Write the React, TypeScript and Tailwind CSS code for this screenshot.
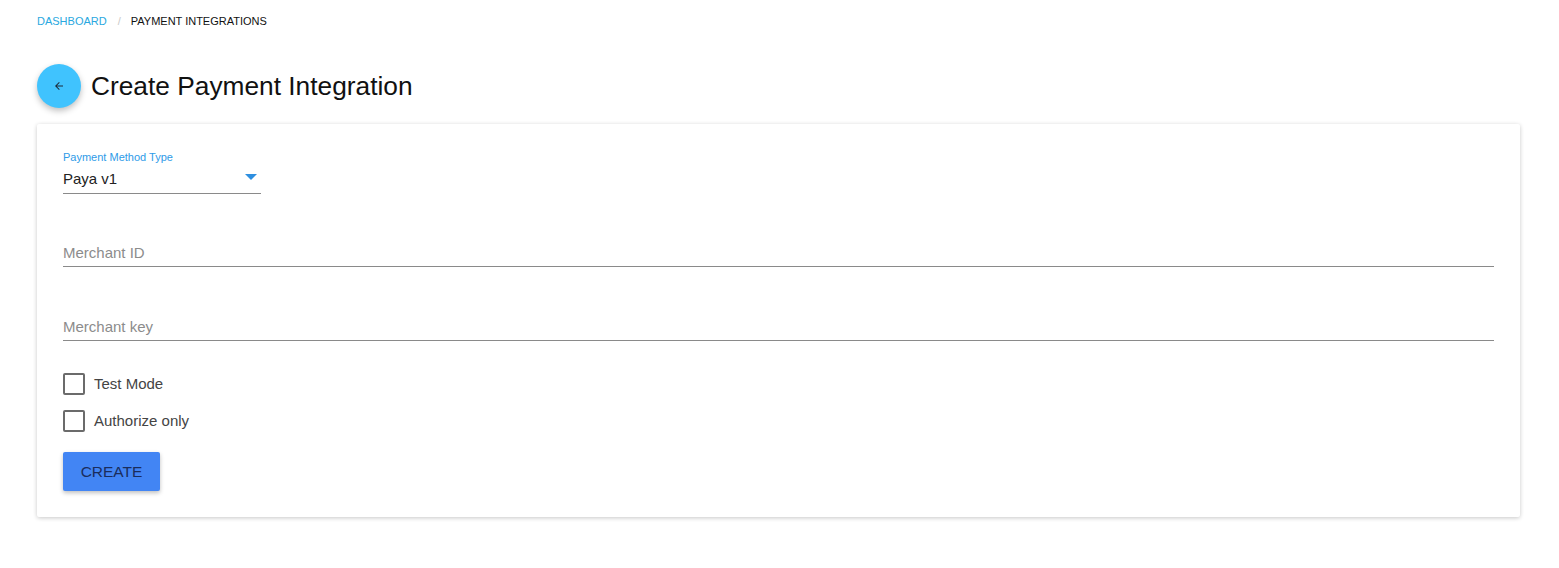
import React from "react";

const font = { fontFamily: '"Liberation Sans", Arial, sans-serif' };

function Field({ label }: { label: string }) {
  return (
    <div className="w-full border-b border-[#8a8a8a] pb-[4px] text-[15px] leading-[18px] text-[#8c8c8c]">
      {label}
    </div>
  );
}

function Check({ label }: { label: string }) {
  return (
    <label className="flex items-center gap-[9px] h-[22px]">
      <span className="w-[22px] h-[22px] rounded-[2px] border-2 border-[#6b6b6b] bg-white" />
      <span className="text-[15px] text-[#444]">{label}</span>
    </label>
  );
}

export default function App() {
  return (
    <div className="min-h-screen bg-white pl-[37px] pr-[39px] pt-[14px] pb-[50px] text-black" style={font}>
      <nav className="flex items-center text-[11px] leading-[14px] h-[14px]">
        <span className="text-[#29a8e0]">DASHBOARD</span>
        <span className="ml-[11px] mr-[10px] text-[#c9c9c9]">/</span>
        <span className="text-[#111]">PAYMENT INTEGRATIONS</span>
      </nav>

      <div className="flex items-center gap-[10px] mt-[36px]">
        <button className="w-[44px] h-[44px] rounded-full bg-[#40c3fe] flex items-center justify-center shadow-[0_3px_6px_rgba(0,0,0,0.25)]">
          <svg width="12" height="12" viewBox="0 0 24 24" fill="#1c2b3a">
            <path d="M20 11H7.83l5.59-5.59L12 4l-8 8 8 8 1.41-1.41L7.83 13H20v-2z" />
          </svg>
        </button>
        <h1 className="text-[26.3px] leading-[30px] text-[#111]">Create Payment Integration</h1>
      </div>

      <div className="mt-[16px] bg-white rounded-[2px] shadow-[0_1px_4px_rgba(0,0,0,0.22)] px-[26px] pt-[27px] pb-[26px]">
        <div className="w-[198px]">
          <div className="text-[11px] leading-[13px] text-[#2e9be8]">Payment Method Type</div>
          <div className="flex items-center justify-between border-b border-[#8a8a8a] h-[29px] mt-[1px]">
            <span className="text-[15px] leading-[18px] text-[#222]">Paya v1</span>
            <svg width="12" height="6" viewBox="0 0 12 6" className="mr-[4px] mb-[4px]">
              <path d="M0 0h12L6 6z" fill="#2e8fe0" />
            </svg>
          </div>
        </div>

        <div className="mt-[50px]">
          <Field label="Merchant ID" />
        </div>
        <div className="mt-[51px]">
          <Field label="Merchant key" />
        </div>

        <div className="mt-[32px] flex flex-col gap-[15px]">
          <Check label="Test Mode" />
          <Check label="Authorize only" />
        </div>

        <button className="mt-[20px] w-[97px] h-[39px] rounded-[2px] bg-[#4285f4] text-[15.5px] text-[#1a2d5c] shadow-[0_2px_4px_rgba(0,0,0,0.25)]">
          CREATE
        </button>
      </div>
    </div>
  );
}
